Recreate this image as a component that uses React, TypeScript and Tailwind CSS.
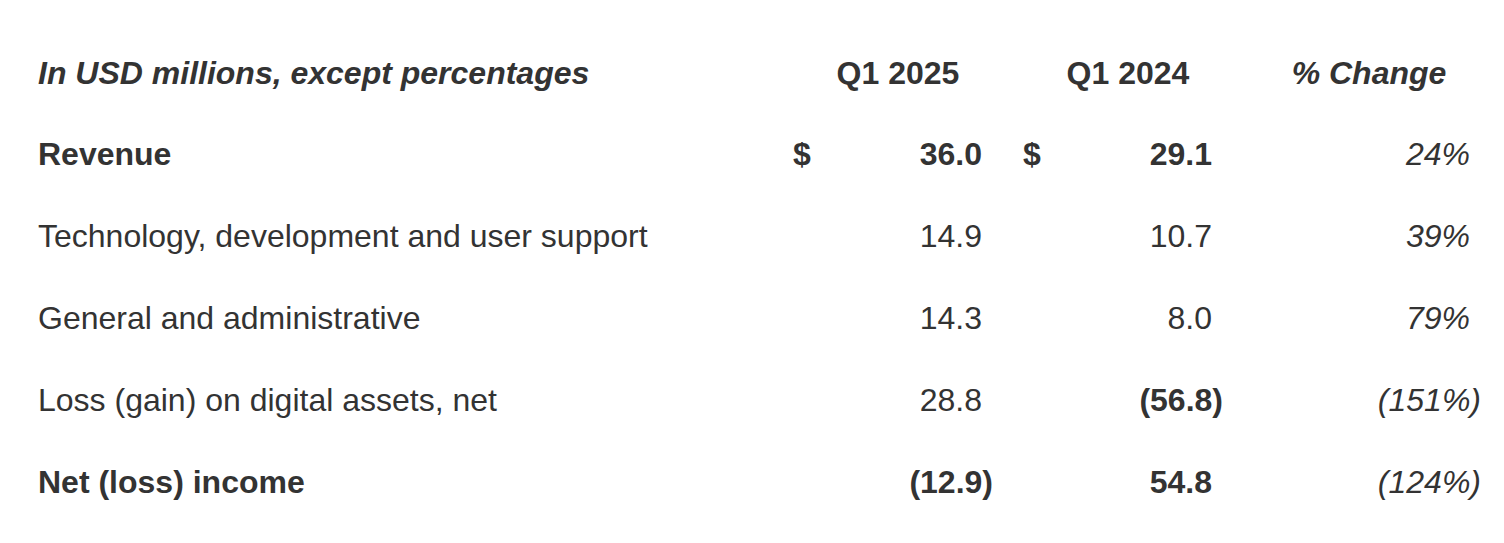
import React from 'react';

type Cell = { text: string; bold?: boolean; paren?: boolean };

interface Row {
  label: string;
  bold?: boolean;
  dollar?: boolean;
  cur: Cell;
  prev: Cell;
  change: Cell;
}

const rows: Row[] = [
  {
    label: 'Revenue',
    bold: true,
    dollar: true,
    cur: { text: '36.0', bold: true },
    prev: { text: '29.1', bold: true },
    change: { text: '24%' },
  },
  {
    label: 'Technology, development and user support',
    cur: { text: '14.9' },
    prev: { text: '10.7' },
    change: { text: '39%' },
  },
  {
    label: 'General and administrative',
    cur: { text: '14.3' },
    prev: { text: '8.0' },
    change: { text: '79%' },
  },
  {
    label: 'Loss (gain) on digital assets, net',
    cur: { text: '28.8' },
    prev: { text: '56.8', bold: true, paren: true },
    change: { text: '151%', paren: true },
  },
  {
    label: 'Net (loss) income',
    bold: true,
    cur: { text: '12.9', bold: true, paren: true },
    prev: { text: '54.8', bold: true },
    change: { text: '124%', paren: true },
  },
];

// numbers line up on their last digit, a closing paren hangs past it
const Value: React.FC<{ cell: Cell; italic?: boolean }> = ({ cell, italic }) => (
  <span className={`${cell.bold ? 'font-bold' : 'font-normal'} ${italic ? 'italic' : ''}`}>
    {cell.paren ? '(' : ''}
    {cell.text}
    {cell.paren && <span className="-mr-[11px]">)</span>}
  </span>
);

export default function App() {
  return (
    <div
      className="w-[1504px] h-[543px] bg-white text-[#333333] text-[32px] leading-[48px] pl-[38px] pt-[33px]"
      style={{ fontFamily: '"Liberation Sans", Arial, sans-serif' }}
    >
      {/* Header */}
      <div className="flex h-[80px] items-center font-bold">
        <div className="w-[755px] italic">In USD millions, except percentages</div>
        <div className="w-[230px] pr-[20px] text-center">Q1 2025</div>
        <div className="w-[230px] pr-[20px] text-center">Q1 2024</div>
        <div className="w-[232px] text-center italic">% Change</div>
      </div>

      {rows.map((row) => (
        <div key={row.label} className="flex h-[82px] items-center">
          <div className={`w-[755px] ${row.bold ? 'font-bold' : ''}`}>{row.label}</div>
          <div className="w-[230px] pr-[20px]">
            <div className="flex justify-between pr-[21px]">
              <span className="font-bold">{row.dollar ? '$' : ''}</span>
              <Value cell={row.cur} />
            </div>
          </div>
          <div className="w-[230px] pr-[20px]">
            <div className="flex justify-between pr-[21px]">
              <span className="font-bold">{row.dollar ? '$' : ''}</span>
              <Value cell={row.prev} />
            </div>
          </div>
          <div className="w-[232px] pr-[15px] text-right">
            <Value cell={row.change} italic />
          </div>
        </div>
      ))}
    </div>
  );
}
